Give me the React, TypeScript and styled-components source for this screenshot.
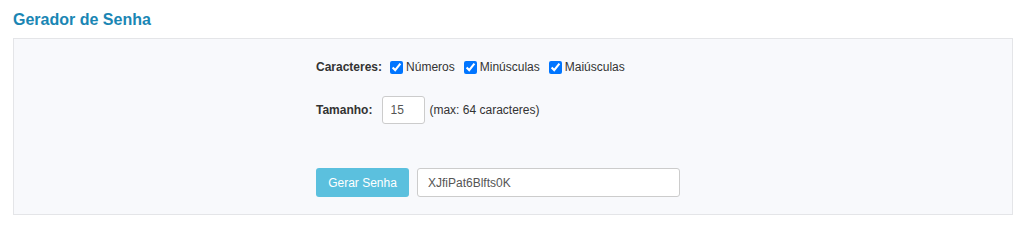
import styled, { createGlobalStyle } from "styled-components"
import { useState } from "react"

const GlobalStyle = createGlobalStyle`
  html, body {
    margin: 0;
    padding: 0;
    background: #ffffff;
    font-family: "Liberation Sans", Arial, sans-serif;
    color: #333;
  }
`

const options = [
  { id: "num", label: "Números" },
  { id: "min", label: "Minúsculas" },
  { id: "mai", label: "Maiúsculas" },
]

const App = () => {
  const [checked, setChecked] = useState<Record<string, boolean>>({ num: true, min: true, mai: true })
  const [size, setSize] = useState("15")
  const [password] = useState("XJfiPat6Blfts0K")

  return (
    <Page>
      <GlobalStyle />
      <Title>Gerador de Senha</Title>
      <Panel>
        <Content>
          <Row>
            <Label>Caracteres:</Label>
            <Options>
              {options.map(opt => (
                <Check key={opt.id}>
                  <input
                    type="checkbox"
                    checked={checked[opt.id]}
                    onChange={() => setChecked({ ...checked, [opt.id]: !checked[opt.id] })}
                  />
                  {opt.label}
                </Check>
              ))}
            </Options>
          </Row>

          <SizeRow>
            <Label>Tamanho:</Label>
            <SizeInput value={size} onChange={e => setSize(e.target.value)} />
            <Hint>(max: 64 caracteres)</Hint>
          </SizeRow>

          <ActionRow>
            <Button>Gerar Senha</Button>
            <Output readOnly value={password} />
          </ActionRow>
        </Content>
      </Panel>
    </Page>
  )
}

const Page = styled.div`
  padding: 0 11px 0 13px;
`

const Title = styled.h2`
  margin: 10px 0 8px;
  font-size: 16px;
  line-height: 20px;
  font-weight: bold;
  color: #1a86b4;
`

const Panel = styled.div`
  box-sizing: border-box;
  border: 1px solid #e4e5e8;
  background: #f8f9fc;
  padding: 18px 0 17px 302px;
`

const Content = styled.div`
  display: flex;
  flex-direction: column;
`

const Row = styled.div`
  display: flex;
  align-items: center;
  height: 20px;
  font-size: 12px;
`

const Label = styled.span`
  font-weight: bold;
  font-size: 12px;
  color: #333;
`

const Options = styled.div`
  display: flex;
  align-items: center;
  gap: 9px;
  margin-left: 8px;
`

const Check = styled.label`
  display: flex;
  align-items: center;
  gap: 3px;
  font-size: 12px;
  color: #333;

  input {
    margin: 0;
    width: 13px;
    height: 13px;
  }
`

const SizeRow = styled(Row)`
  height: 28px;
  margin-top: 19px;
`

const SizeInput = styled.input`
  box-sizing: border-box;
  width: 43px;
  height: 28px;
  margin-left: 10px;
  padding: 0 7px;
  border: 1px solid #ccc;
  border-radius: 3px;
  background: #fff;
  font-family: "Liberation Sans", Arial, sans-serif;
  font-size: 12px;
  color: #555;
`

const Hint = styled.span`
  margin-left: 4px;
  font-size: 12px;
  color: #333;
`

const ActionRow = styled.div`
  display: flex;
  align-items: center;
  gap: 8px;
  margin-top: 44px;
  height: 29px;
`

const Button = styled.button`
  box-sizing: border-box;
  width: 93px;
  height: 29px;
  border: none;
  border-radius: 3px;
  background: #5bc0de;
  color: #fff;
  font-family: "Liberation Sans", Arial, sans-serif;
  font-size: 12px;
  padding: 0;
  cursor: pointer;
`

const Output = styled.input`
  box-sizing: border-box;
  width: 263px;
  height: 29px;
  padding: 0 10px;
  border: 1px solid #ccc;
  border-radius: 3px;
  background: #fff;
  font-family: "Liberation Sans", Arial, sans-serif;
  font-size: 12px;
  color: #555;
`

export default App
